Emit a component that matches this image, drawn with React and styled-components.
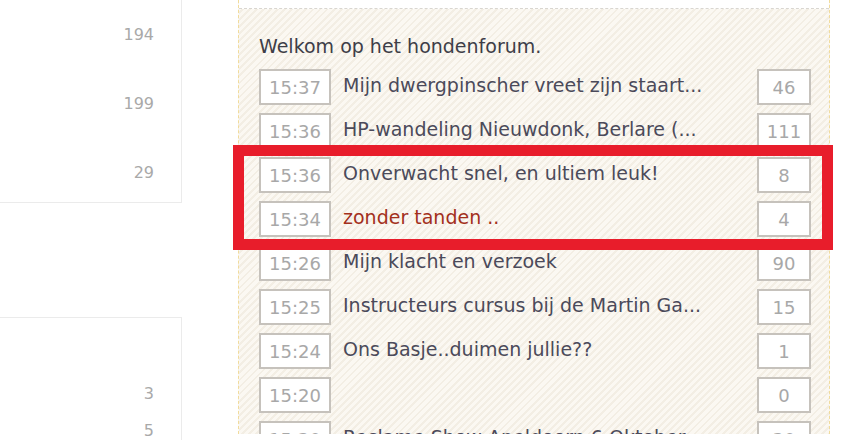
import React from 'react';
import styled, { createGlobalStyle } from 'styled-components';

const GlobalStyle = createGlobalStyle`
  html, body {
    margin: 0;
    padding: 0;
    background: #fff;
    overflow: hidden;
  }
  body {
    font-family: "DejaVu Sans", Verdana, sans-serif;
  }
`;

const Page = styled.div`
  position: relative;
  display: flex;
  align-items: flex-start;
  width: 850px;
  height: 440px;
  overflow: hidden;
`;

const Sidebar = styled.div`
  width: 182px;
  flex-shrink: 0;
  display: flex;
  flex-direction: column;
`;

const StatBox = styled.ul`
  list-style: none;
  margin: ${p => p.top || 0}px 0 0;
  padding: ${p => p.padTop}px 27px ${p => p.padBottom}px 0;
  display: flex;
  flex-direction: column;
  gap: ${p => p.gap}px;
  border-right: 1px solid #ebebeb;
  border-top: ${p => (p.openTop ? 'none' : '1px solid #ebebeb')};
  border-bottom: ${p => (p.openBottom ? 'none' : '1px solid #ebebeb')};
`;

const Stat = styled.li`
  text-align: right;
  font-size: 16px;
  line-height: 20px;
  color: #a9a9a9;
`;

const Forum = styled.section`
  margin-left: 56px;
  width: 590px;
  height: 434px;
  flex-shrink: 0;
  overflow: hidden;
  border-left: 1px dashed #f1dc9c;
  border-right: 1px dashed #f1dc9c;
  background: repeating-linear-gradient(
    135deg,
    #fbf8f2 0px,
    #fbf8f2 3px,
    #f3eee4 3px,
    #f3eee4 5px
  );
`;

const ForumTop = styled.div`
  height: 8px;
  background: #fff;
  border-bottom: 1px dashed #d9d6d0;
`;

const ForumBody = styled.div`
  padding: 25px 18px 0 20px;
`;

const Welcome = styled.p`
  margin: 0 0 11px;
  font-size: 19px;
  line-height: 24px;
  color: #3e3e48;
`;

const Topics = styled.ul`
  list-style: none;
  margin: 0;
  padding: 0;
  display: flex;
  flex-direction: column;
  gap: 8px;
`;

const Topic = styled.li`
  display: flex;
  align-items: center;
  gap: 12px;
  height: 36px;
`;

const Cell = styled.span`
  box-sizing: border-box;
  flex-shrink: 0;
  width: ${p => p.width}px;
  height: 36px;
  display: flex;
  align-items: center;
  justify-content: center;
  background: #fff;
  border: 2px solid #c6c2bc;
  font-size: 18px;
  color: #a8a8a8;
`;

const Title = styled.span`
  flex: 1;
  font-size: 19px;
  color: ${p => (p.hot ? '#a3301c' : '#4b4a5a')};
  white-space: nowrap;
  overflow: hidden;
  margin-top: -4px;
`;

const Highlight = styled.div`
  position: absolute;
  left: 233px;
  top: 145px;
  width: 578px;
  height: 83px;
  border: 11px solid #e81d2b;
  pointer-events: none;
`;

const topics = [
  { time: '15:37', title: 'Mijn dwergpinscher vreet zijn staart...', count: 46 },
  { time: '15:36', title: 'HP-wandeling Nieuwdonk, Berlare (...', count: 111 },
  { time: '15:36', title: 'Onverwacht snel, en ultiem leuk!', count: 8 },
  { time: '15:34', title: 'zonder tanden ..', count: 4, hot: true },
  { time: '15:26', title: 'Mijn klacht en verzoek', count: 90 },
  { time: '15:25', title: 'Instructeurs cursus bij de Martin Ga...', count: 15 },
  { time: '15:24', title: 'Ons Basje..duimen jullie??', count: 1 },
  { time: '15:20', title: '', count: 0 },
  { time: '15:20', title: 'Reclame Show Apeldoorn 6 Oktober', count: 30 },
];

export default function App() {
  return (
    <>
      <GlobalStyle />
      <Page>
        <Sidebar>
          <StatBox openTop padTop={25} padBottom={19} gap={49}>
            <Stat>194</Stat>
            <Stat>199</Stat>
            <Stat>29</Stat>
          </StatBox>
          <StatBox top={114} openBottom padTop={66} padBottom={0} gap={17}>
            <Stat>3</Stat>
            <Stat>5</Stat>
          </StatBox>
        </Sidebar>
        <Forum>
          <ForumTop />
          <ForumBody>
            <Welcome>Welkom op het hondenforum.</Welcome>
            <Topics>
              {topics.map((t, i) => (
                <Topic key={i}>
                  <Cell width={72}>{t.time}</Cell>
                  <Title hot={t.hot}>{t.title}</Title>
                  <Cell width={54}>{t.count}</Cell>
                </Topic>
              ))}
            </Topics>
          </ForumBody>
        </Forum>
        <Highlight />
      </Page>
    </>
  );
}
